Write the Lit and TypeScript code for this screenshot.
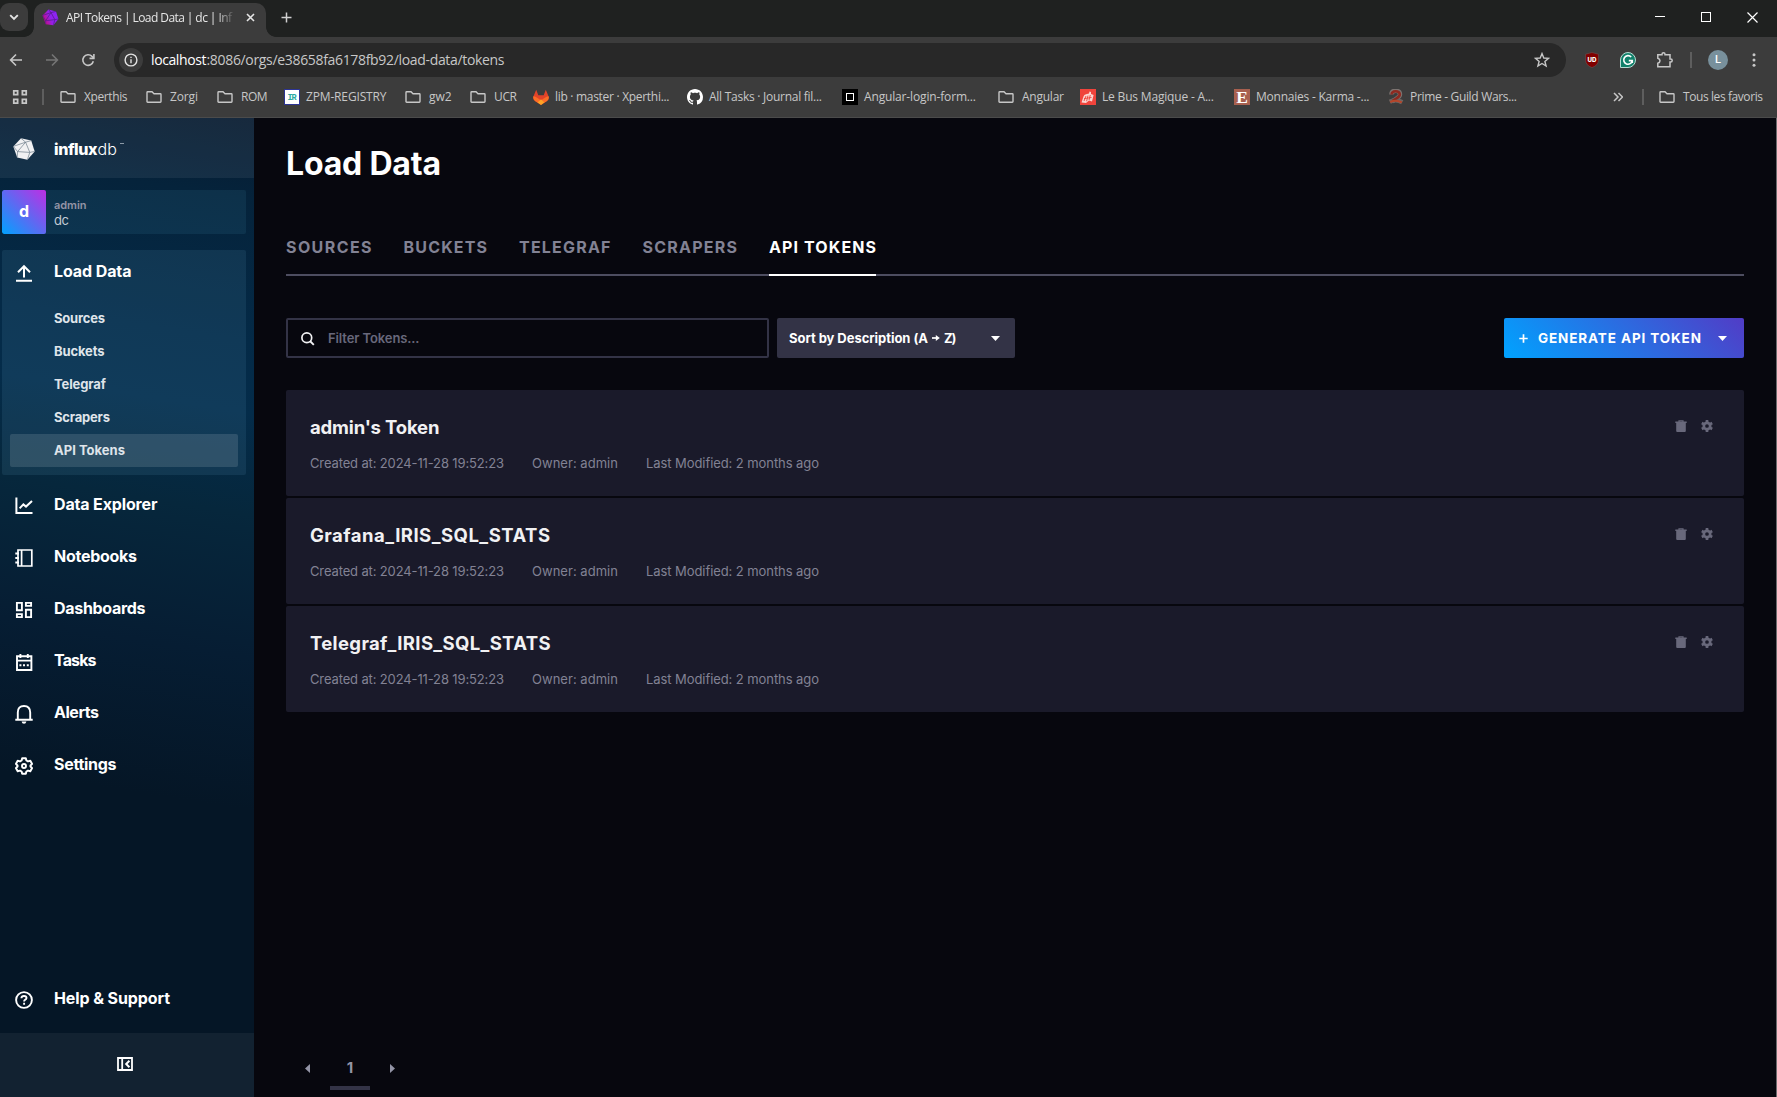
import { LitElement, html, css, svg } from "lit";
import type { TemplateResult, SVGTemplateResult } from "lit";
import { customElement, property } from "lit/decorators.js";
import { classMap } from "lit/directives/class-map.js";
import { styleMap } from "lit/directives/style-map.js";

const icon = (w: number, h: number, body: SVGTemplateResult) =>
  html`<svg width=${w} height=${h} viewBox="0 0 ${w} ${h}" fill="none" stroke="currentColor">${body}</svg>`;

/* A single-line label whose tracking is adjusted so that it spans a given width. */
@customElement("fit-label")
class FitLabel extends LitElement {
  @property({ type: Number }) span = 0;
  static styles = css`
    :host { display: inline-block; white-space: pre; }
    .text { display: inline-block; }
  `;
  render() {
    return html`<span class="text"><slot></slot></span>`;
  }
  updated() {
    const el = this.renderRoot.querySelector<HTMLElement>(".text")!;
    const n = (this.textContent ?? "").length;
    el.style.letterSpacing = "0px";
    const natural = el.getBoundingClientRect().width;
    el.style.letterSpacing = `${(this.span - natural) / Math.max(1, n - 1)}px`;
    this.style.width = `${this.span}px`;
  }
}

const fit = (text: string, span: number) => html`<fit-label .span=${span}>${text}</fit-label>`;

const folder = icon(16, 16, svg`<path d="M1 12.6V3.4Q1 2.7 1.7 2.7H6L8 4.7H14.3Q15 4.7 15 5.4V12.6Q15 13.3 14.3 13.3H1.7Q1 13.3 1 12.6Z" stroke-width="1.4"/>`);

const favicons: Record<string, TemplateResult> = {
  folder,
  iris: html`<svg width="16" height="16" viewBox="0 0 16 16"><rect x=".5" y=".5" width="15" height="15" fill="#fff" stroke="#2c3494"/><text x="8" y="11.2" font-family="Liberation Mono, monospace" font-weight="700" font-size="8.5" text-anchor="middle" textLength="9" fill="#2aa9a0">IR</text></svg>`,
  gitlab: html`<svg width="16" height="16" viewBox="0 0 16 16"><path d="M3.2.8 5.3 6.3H10.7L12.8.8 15.6 7.6Q16.4 10.2 14 12L8 16 2 12Q-.4 10.2.4 7.6Z" fill="#e24329"/><path d="M15.6 7.2Q12.8 7.4 8 11.5L10.8 13.9 14 12Q16.4 10.2 15.6 7.2ZM.4 7.2Q3.2 7.4 8 11.5L5.2 13.9 2 12Q-.4 10.2.4 7.2Z" fill="#fc6d26"/><path d="M8 10.2 4.6 13.4 8 16 11.4 13.4Z" fill="#fca326"/></svg>`,
  github: html`<svg width="16" height="16" viewBox="0 0 16 16"><path fill="#fff" d="M8 0C3.58 0 0 3.58 0 8c0 3.54 2.29 6.53 5.47 7.59.4.07.55-.17.55-.38 0-.19-.01-.82-.01-1.49-2.01.37-2.53-.49-2.69-.94-.09-.23-.48-.94-.82-1.13-.28-.15-.68-.52-.01-.53.63-.01 1.08.58 1.23.82.72 1.21 1.87.87 2.33.66.07-.52.28-.87.51-1.07-1.78-.2-3.64-.89-3.64-3.95 0-.87.31-1.59.82-2.15-.08-.2-.36-1.02.08-2.12 0 0 .67-.21 2.2.82.64-.18 1.32-.27 2-.27s1.36.09 2 .27c1.53-1.04 2.2-.82 2.2-.82.44 1.1.16 1.92.08 2.12.51.56.82 1.27.82 2.15 0 3.07-1.87 3.75-3.65 3.95.29.25.54.73.54 1.48 0 1.07-.01 1.93-.01 2.2 0 .21.15.46.55.38A8.01 8.01 0 0 0 16 8c0-4.42-3.58-8-8-8z"/></svg>`,
  box: html`<svg width="16" height="16" viewBox="0 0 16 16"><rect width="16" height="16" fill="#000"/><rect x="4.5" y="4.5" width="7" height="7" fill="none" stroke="#fff"/></svg>`,
  bus: html`<svg width="16" height="16" viewBox="0 0 16 16"><rect width="16" height="16" fill="#f0443c"/><path d="M1.5 13.5 3.5 7.5Q4 5.6 6 5.2L9 4.4 9.5 2.6 11 3V5L13.6 6 12 12.5 9 11.5 6 14Z" fill="#fbd6d2"/><path d="M4 12 6 7M6.6 12.2 8 6.6M9 11 10.3 6M4 9.6 11.5 8.5" stroke="#f0443c" stroke-width=".9"/></svg>`,
  etsy: html`<svg width="16" height="16" viewBox="0 0 16 16"><rect width="16" height="16" fill="#a8604f"/><text x="8" y="14" font-family="Liberation Serif, serif" font-weight="700" font-size="17.5" text-anchor="middle" fill="#fff">E</text></svg>`,
  prime: html`<svg width="16" height="16" viewBox="0 0 16 16"><path d="M3.4 5.5Q3.4 1.8 7.6 1.8T12 5.2Q12 7.6 8.8 9.3L4.3 12.3" stroke="#7c7370" stroke-width="4.4" fill="none"/><path d="M1.8 12.8Q8 9.6 14.2 13.2" stroke="#6d6562" stroke-width="4.6" fill="none"/><path d="M3.6 5.5Q3.8 2.2 7.6 2.2T11.8 5.2Q11.8 7.4 8.8 9L4.3 12" stroke="#8e2a20" stroke-width="2.6" fill="none"/><path d="M2.2 13Q8 10.2 13.8 13.4" stroke="#b5452a" stroke-width="2" fill="none"/></svg>`,
};

/* [icon, title, title width, slot width] */
const bookmarks: [string, string, number, number][] = [
  ["folder", "Xperthis", 43.5, 86],
  ["folder", "Zorgi", 28, 71],
  ["folder", "ROM", 26.5, 67],
  ["iris", "ZPM-REGISTRY", 80.5, 121],
  ["folder", "gw2", 22.5, 65],
  ["folder", "UCR", 23, 63],
  ["gitlab", "lib · master · Xperthi...", 114.5, 154],
  ["github", "All Tasks · Journal fil...", 113, 155],
  ["box", "Angular-login-form...", 112, 156],
  ["folder", "Angular", 42, 82],
  ["bus", "Le Bus Magique - A...", 112, 154],
  ["etsy", "Monnaies - Karma -...", 113.5, 154],
  ["prime", "Prime - Guild Wars...", 107, 225],
];

@customElement("browser-chrome")
class BrowserChrome extends LitElement {
  static styles = css`
    :host { display: block; height: 118px; box-sizing: border-box; background: #3c3c3c; border-bottom: 1px solid #4b4b4b;
      font: 12px/16px "Open Sans", "Noto Sans", sans-serif; color: #c7c7c7; }
    svg { display: block; flex: none; }
    .strip { display: flex; height: 37px; background: #1f2120; }
    .search { display: flex; align-items: center; justify-content: center; width: 28px; height: 28px; margin-top: 3px; border-radius: 9px; background: #3c3c3c; color: #e3e3e3; }
    .flare { width: 10px; height: 10px; align-self: flex-end; }
    .flare.left { margin-left: -4px; background: radial-gradient(circle at 0 0, transparent 9.5px, #3c3c3c 10.2px); }
    .flare.right { background: radial-gradient(circle at 100% 0, transparent 9.5px, #3c3c3c 10.2px); }
    .tab { display: flex; align-items: center; box-sizing: border-box; width: 232px; height: 34px; margin-top: 3px; padding: 0 11px 6px 8px; border-radius: 10px 10px 0 0; background: #3c3c3c; color: #e6e6e6; }
    .tab .name { width: 169px; margin: 1px 0 0 7px; white-space: nowrap; -webkit-mask-image: linear-gradient(90deg, #000 150px, transparent 170px); }
    .tab .x { margin-left: auto; }
    .plus { margin: 12px 0 0 5px; color: #d0d0d0; }
    .winctl { display: flex; align-items: flex-start; gap: 36px; margin-left: auto; padding: 12px 19px 0 0; color: #fff; }
    .bar { display: flex; align-items: center; height: 46px; padding-left: 9px; color: #c7c7c7; }
    .nav { display: flex; gap: 22px; }
    .dim { color: #757575; }
    .omni { display: flex; align-items: center; box-sizing: border-box; width: 1452px; height: 34px; margin-left: 19px; padding: 0 16px 0 5px; border-radius: 17px; background: #282828; font-size: 14px; }
    .info { display: flex; align-items: center; justify-content: center; width: 24px; height: 24px; border-radius: 12px; background: #3c3c3c; margin-right: 8px; color: #e3e3e3; }
    .host { color: #fff; }
    .star { margin-left: auto; }
    .ext { display: flex; align-items: center; }
    .shield { margin-left: 19px; }
    .writer { margin-left: 21px; }
    .puzzle { margin-left: 20px; }
    .ext .vr, .avatar { margin-left: 16px; }
    .kebab { margin-left: 24px; }
    .vr { width: 2px; height: 16px; background: #5e5e5e; }
    .avatar { width: 20px; height: 20px; border-radius: 50%; background: #78909c; color: #fff; text-align: center; font: 500 11px/20px Roboto, sans-serif; }
    .marks { display: flex; align-items: center; height: 28px; padding: 0 14px 0 12px; white-space: nowrap; }
    .mark { display: flex; align-items: center; gap: 8px; }
    .mark.tight { gap: 6px; }
    .apps { margin-right: 14px; }
    .first { margin-right: 16px; }
    .more { margin-right: 19px; }
    .last { margin-left: 15px; }
  `;
  render() {
    return html`
      <div class="strip">
        <div class="search">${icon(10, 10, svg`<path d="M1.2 3.2 5 7 8.8 3.2" stroke-width="1.9"/>`)}</div>
        <div class="flare left"></div>
        <div class="tab">
          <svg width="17" height="17" viewBox="0 0 17 17">
            <defs><linearGradient id="g" x1="0" y1=".7" x2="1" y2=".3"><stop offset="0" stop-color="#d30971"/><stop offset=".5" stop-color="#9221ea"/><stop offset="1" stop-color="#8a25f5"/></linearGradient></defs>
            <path d="M6.5.4 14 2.4 16.4 10 11.4 16.3 3.8 15.2.6 6.4Z" fill="url(#g)"/>
            <path d="M.6 6.4 9 3.6 14 2.4M9 3.6 6.5.4M9 3.6 12.8 10.6 3.6 11.8ZM12.8 10.6 16.4 10M12.8 10.6 11.4 16.3M3.6 11.8 3.8 15.2M3.6 11.8.6 6.4" stroke="#5a1a92" stroke-width=".8" fill="none"/>
          </svg>
          <div class="name">${fit("API Tokens | Load Data | dc | Inf", 166)}</div>
          <div class="x">${icon(9, 9, svg`<path d="M1 1 8 8M8 1 1 8" stroke-width="1.6"/>`)}</div>
        </div>
        <div class="flare right"></div>
        <div class="plus">${icon(11, 11, svg`<path d="M5.5.5V10.5M.5 5.5H10.5" stroke-width="1.5"/>`)}</div>
        <div class="winctl">
          ${icon(10, 10, svg`<path d="M0 4.5H10"/>`)}
          ${icon(10, 10, svg`<rect x=".5" y=".5" width="9" height="9"/>`)}
          ${icon(11, 11, svg`<path d="M.5.5 10.5 10.5M10.5.5.5 10.5" stroke-width="1.2"/>`)}
        </div>
      </div>
      <div class="bar">
        <div class="nav">
          ${icon(14, 14, svg`<path d="M13 7H2M7 1.5 1.6 7 7 12.5" stroke-width="1.6"/>`)}
          <span class="dim">${icon(14, 14, svg`<path d="M1 7H12M7 1.5 12.4 7 7 12.5" stroke-width="1.6"/>`)}</span>
          ${icon(14, 14, svg`<path d="M12.3 8.2A5.3 5.3 0 1 1 11 3.4L12.6 5" stroke-width="1.6"/><path d="M12.9 1V5.4H8.5" stroke-width="1.6"/>`)}
        </div>
        <div class="omni">
          <div class="info">${icon(14, 14, svg`<circle cx="7" cy="7" r="5.9" stroke-width="1.4"/><path d="M7 6.2V10.2M7 3.8V5.1" stroke-width="1.4"/>`)}</div>
          <span class="host">${fit("localhost", 55.5)}</span>${fit(":8086/orgs/e38658fa6178fb92/load-data/tokens", 298)}
          <span class="star">${icon(16, 16, svg`<path d="M8 1.6 9.8 6 14.5 6.3 10.9 9.4 12.1 14 8 11.5 3.9 14 5.1 9.4 1.5 6.3 6.2 6Z" stroke-width="1.4"/>`)}</span>
        </div>
        <div class="ext">
          <svg class="shield" width="14" height="16" viewBox="0 0 14 16"><path d="M7 .5 13.4 2.2V8.5Q13.2 13.4 7 15.6.8 13.4.6 8.5V2.2Z" fill="#800000" stroke="#6b5252" stroke-width=".6"/><text x="7" y="9.8" font-family="Inter, sans-serif" font-weight="800" font-size="6.2" text-anchor="middle" fill="#fff">UD</text></svg>
          <svg class="writer" width="16" height="16" viewBox="0 0 16 16"><path d="M8 .5A7.5 7.5 0 1 1 8 15.5H.5V8A7.5 7.5 0 0 1 8 .5Z" fill="#11806a" stroke="#b7dcd3" stroke-width="1"/><path d="M11.2 5A4.3 4.3 0 1 0 12.3 8.6H8.8M12.3 8.4V11" stroke="#fff" stroke-width="1.6" fill="none"/></svg>
          <span class="puzzle">${icon(18, 18, svg`<path d="M1.8 3.8H6V3.2A1.5 1.5 0 0 1 9 3.2V3.8H14V8H14.7A1.5 1.5 0 0 1 14.7 11H14V15.8H1.8V12.3Q4 11.7 4 9.8T1.8 7.3Z" stroke-width="1.5"/>`)}</span>
          <div class="vr"></div>
          <div class="avatar">L</div>
          <svg class="kebab" width="4" height="14" viewBox="0 0 4 14" fill="#c7c7c7"><circle cx="2" cy="1.8" r="1.5"/><circle cx="2" cy="7" r="1.5"/><circle cx="2" cy="12.2" r="1.5"/></svg>
        </div>
      </div>
      <div class="marks">
        <div class="apps">${icon(16, 16, svg`<path d="M1.8 1.8H5.6V5.6H1.8ZM10.4 1.8H14.2V5.6H10.4ZM1.8 10.4H5.6V14.2H1.8ZM10.4 10.4H14.2V14.2H10.4Z" stroke-width="1.8"/>`)}</div>
        <div class="vr first"></div>
        ${bookmarks.map(([kind, title, w, slot]) => html`
          <div class=${classMap({ mark: true, tight: kind !== "folder" })} style=${styleMap({ width: `${slot}px` })}>${favicons[kind]}${fit(title, w)}</div>`)}
        <div class="more">${icon(10, 10, svg`<path d="M1 1 5 5 1 9M5.5 1 9.5 5 5.5 9" stroke-width="1.5"/>`)}</div>
        <div class="vr"></div>
        <div class="mark last">${folder}${fit("Tous les favoris", 80)}</div>
      </div>`;
  }
}

const gear = (hole: number) => svg`<path d="M7.2 1.2H10.8L11.4 3.5 13 4.4 15.3 3.8 17.1 6.9 15.5 8.5V9.5L17.1 11.1 15.3 14.2 13 13.6 11.4 14.5 10.8 16.8H7.2L6.6 14.5 5 13.6 2.7 14.2.9 11.1 2.5 9.5V8.5L.9 6.9 2.7 3.8 5 4.4 6.6 3.5Z" stroke-width="2" stroke-linejoin="round"/><circle cx="9" cy="9" r=${hole} stroke-width="1.9"/>`;

const navIcons: Record<string, TemplateResult> = {
  load: icon(18, 18, svg`<path d="M9 13.4V2.6M3 8.2 9 2.2 15 8.2M1 16.7H17" stroke-width="2"/>`),
  explorer: icon(18, 18, svg`<path d="M1.4.6V16H17.5M4.6 11.4 8.4 7.4 11 9.6 17 4" stroke-width="2"/>`),
  notebooks: icon(18, 18, svg`<path d="M3 1H16.8V17H3ZM6.6 1V17" stroke-width="1.7"/><path d="M.3 4.6H4M.3 9H4M.3 13.4H4" stroke-width="2"/>`),
  dashboards: icon(18, 18, svg`<path d="M1.9 1.9H6.9V9.2H1.9ZM10.9 1.9H16.1V4.9H10.9ZM10.9 8.7H16.1V16.1H10.9ZM1.9 13.1H6.9V16.1H1.9Z" stroke-width="1.9"/>`),
  tasks: icon(18, 18, svg`<path d="M2 3.2H16.4V17H2ZM2 7.6H16.4M5.4 1V5M12.8 1V5" stroke-width="1.9"/><path d="M4.4 12.3H6.4M8 12.3H10M11.8 12.3H13.8" stroke-width="2"/>`),
  alerts: icon(18, 20, svg`<path d="M2.8 15.6V8.6Q2.8 2 9 2T15.2 8.6V15.6M.3 15.8H17.7" stroke-width="1.9"/><path d="M6.6 17.6H11.4Q11 19.8 9 19.8T6.6 17.6Z" fill="currentColor" stroke="none"/>`),
  settings: icon(18, 18, gear(2)),
  help: icon(18, 18, svg`<circle cx="9" cy="9" r="7.9" stroke-width="1.9"/><path d="M6.4 7.2Q6.5 5 9 5T11.5 7Q11.5 8.2 10 8.9 9.1 9.3 9.1 10.6M9.1 11.8V13.7" stroke-width="1.9"/>`),
};

const mainNav: [string, string, number][] = [
  ["explorer", "Data Explorer", 103.5],
  ["notebooks", "Notebooks", 83],
  ["dashboards", "Dashboards", 91.5],
  ["tasks", "Tasks", 42.5],
  ["alerts", "Alerts", 45],
  ["settings", "Settings", 62.5],
];
const subNav: [string, number][] = [["Sources", 51], ["Buckets", 50.5], ["Telegraf", 52], ["Scrapers", 56], ["API Tokens", 71]];

@customElement("side-nav")
class SideNav extends LitElement {
  static styles = css`
    :host { display: flex; flex-direction: column; width: 254px; flex: none; color: #fff; font: 700 16px/20px Inter, sans-serif;
      background: linear-gradient(189deg, #071a30 0%, #05233b 8%, #042a47 22%, #042c4a 29%, #06273c 39%, #061d33 53%, #051626 68%, #051626 100%); }
    svg { display: block; flex: none; }
    .brand { display: flex; height: 60px; background: rgba(255, 255, 255, 0.065); }
    .logo { margin: 20px 0 0 13px; }
    .word { display: flex; margin: 21px 0 0 19px; font-size: 16px; font-weight: 800; }
    .word .db { font-weight: 300; }
    .word .tm { width: 4px; height: 1px; margin: 4px 0 0 3px; background: #8c9aa7; }
    .user { display: flex; width: 244px; height: 44px; margin: 12px 0 0 2px; border-radius: 2px; overflow: hidden; background: rgba(100, 200, 230, 0.09); }
    .badge { width: 44px; height: 44px; border-radius: 2px; background: linear-gradient(45deg, #00a3ff, #be2ee4); text-align: center; font-size: 16px; line-height: 43px; }
    .who { padding: 8px 0 0 8px; font-size: 11px; font-weight: 600; line-height: 14px; color: #9394a6; }
    .who .org { display: block; font-size: 13px; font-weight: 400; line-height: 16px; letter-spacing: -0.4px; color: #c4ccd6; }
    .panel { box-sizing: border-box; width: 244px; height: 225px; margin: 16px 0 0 2px; padding: 11px 8px 0; border-radius: 2px; background: rgba(90, 150, 180, 0.15); }
    .row { display: flex; align-items: center; height: 20px; }
    .row .ic { display: flex; justify-content: center; width: 18px; margin: 3px 21px 0 15px; height: 20px; align-items: center; }
    .panel .row { margin: 0 0 21px -2px; height: 20px; }
    .panel .ic { margin: 3px 21px 0 7px; }
    .sub { height: 33px; padding-left: 44px; border-radius: 2px; font-size: 13px; line-height: 33px; color: #dfe4ea; }
    .sub.on { background: rgba(255, 255, 255, 0.125); }
    .list { display: flex; flex-direction: column; gap: 32px; margin-top: 19px; }
    .help { margin: auto 0 25px; }
    .foot { display: flex; align-items: center; justify-content: center; height: 64px; padding: 0 5px 3px 0; box-sizing: border-box; background: rgba(255, 255, 255, 0.055); }
  `;
  row(kind: string, label: string, w: number, extra = "") {
    return html`<div class="row ${extra}"><span class="ic">${navIcons[kind]}</span>${fit(label, w)}</div>`;
  }
  render() {
    return html`
      <div class="brand">
        <svg class="logo" width="22" height="22" viewBox="0 0 22 22">
          <path d="M8 .3 18.2 2.6 21.7 13.4 14.4 21.7 4.2 19.4.3 8.4Z" fill="#f1f1f3"/>
          <path d="M.3 8.4 12.6 4.2 18.2 2.6M12.6 4.2 8 .3M12.6 4.2 16.8 14.4 4.6 13.6ZM16.8 14.4 21.7 13.4M16.8 14.4 14.4 21.7M4.6 13.6 4.2 19.4M4.6 13.6.3 8.4" stroke="#6d7c8a" stroke-width=".7" fill="none"/>
        </svg>
        <div class="word">${fit("influx", 43.5)}<span class="db">${fit("db", 19.5)}</span><span class="tm"></span></div>
      </div>
      <div class="user">
        <div class="badge">d</div>
        <div class="who">${fit("admin", 32.5)}<span class="org">dc</span></div>
      </div>
      <div class="panel">
        ${this.row("load", "Load Data", 77.5)}
        ${subNav.map(([label, w]) => html`<div class=${classMap({ sub: true, on: label === "API Tokens" })}>${fit(label, w)}</div>`)}
      </div>
      <div class="list">${mainNav.map(([k, l, w]) => this.row(k, l, w))}</div>
      ${this.row("help", "Help & Support", 116, "help")}
      <div class="foot">${icon(16, 14, svg`<path d="M1 1H15V13H1ZM5.2 1V13" stroke-width="1.8"/><path d="M12.4 3.8 9.2 7 12.4 10.2" stroke-width="2"/>`)}</div>`;
  }
}

const tabs: [string, number][] = [["SOURCES", 85.5], ["BUCKETS", 83.5], ["TELEGRAF", 91.5], ["SCRAPERS", 94.5], ["API TOKENS", 107]];
const tokens: [string, number][] = [["admin's Token", 129.5], ["Grafana_IRIS_SQL_STATS", 240], ["Telegraf_IRIS_SQL_STATS", 240.5]];

@customElement("tokens-page")
class TokensPage extends LitElement {
  static styles = css`
    :host { display: flex; flex-direction: column; flex: 1; box-sizing: border-box; padding: 0 32px 0 32px; background: #07070e; border-right: 1px solid #6b6b6e;
      color: #fff; font: 700 13px/20px Inter, sans-serif; }
    svg { display: block; flex: none; }
    .title { margin-top: 26px; font-size: 32px; line-height: 40px; }
    .tabs { display: flex; gap: 32px; height: 58px; margin-top: 34px; box-shadow: inset 0 -2px #4d4d60; color: #828294; font-size: 16px; line-height: 58px; }
    .tabs .on { color: #fff; box-shadow: inset 0 -2px #fff; }
    .tools { display: flex; margin-top: 42px; height: 40px; line-height: 40px; }
    .filter { display: flex; align-items: center; box-sizing: border-box; width: 483px; padding-left: 12px; border: 2px solid #333346; border-radius: 2px; font-weight: 600; color: #68687b; }
    .filter svg { margin-right: 13px; color: #f1f1f3; }
    .sort { display: flex; align-items: center; box-sizing: border-box; width: 238px; margin-left: 8px; padding: 0 15px 0 12px; border-radius: 2px; background: #333346; justify-content: space-between; }
    .sort .arrow { margin: 0 4px; }
    .sortText { display: flex; align-items: center; }
    .gen { display: flex; align-items: center; box-sizing: border-box; width: 240px; margin-left: auto; padding: 0 17px 0 15px; border-radius: 2px; background: linear-gradient(45deg, #00a3ff, #513cc6); font-size: 13.5px; }
    .gen .label { margin: 0 auto 0 10px; }
    .cards { display: flex; flex-direction: column; gap: 2px; margin-top: 32px; }
    .card { display: flex; justify-content: space-between; box-sizing: border-box; height: 106px; padding: 24px 31px 0 24px; border-radius: 2px; background: #1a1a2a; }
    .name { font-size: 18.5px; line-height: 26px; color: #f1f1f3; }
    .meta { display: flex; gap: 28px; margin-top: 13px; font-weight: 400; line-height: 20px; color: #828294; }
    .acts { display: flex; gap: 14px; margin-top: 6px; color: #68687b; }
    .pager { display: flex; margin: auto 0 7px 19px; height: 36px; color: #9394a6; font-size: 15px; line-height: 27px; text-align: center; }
    .pager .tri { margin-top: 10px; }
    .pager .num { width: 40px; margin: 0 20px; box-shadow: inset 0 -4px #333346; }
  `;
  render() {
    const caret = icon(9, 5, svg`<path d="M0 0H9L4.5 5Z" fill="currentColor" stroke="none"/>`);
    return html`
      <div class="title">${fit("Load Data", 155)}</div>
      <div class="tabs">${tabs.map(([t, w]) => html`<div class=${classMap({ on: t === "API TOKENS" })}>${fit(t, w)}</div>`)}</div>
      <div class="tools">
        <div class="filter">${icon(15, 15, svg`<circle cx="6.8" cy="6.8" r="4.9" stroke-width="1.7"/><path d="M10 10 13.8 13.8" stroke-width="1.9"/>`)}${fit("Filter Tokens...", 91.5)}</div>
        <div class="sort"><span class="sortText">${fit("Sort by Description (A", 139)}<svg class="arrow" width="8" height="8" viewBox="0 0 8 8"><path d="M0 4H4.5" stroke="#fff" stroke-width="1.7"/><path d="M3.8.9 7.8 4 3.8 7.1Z" fill="#fff"/></svg>${fit("Z)", 12.5)}</span>${caret}</div>
        <div class="gen">${icon(9, 9, svg`<path d="M4.5.3V8.7M.3 4.5H8.7" stroke-width="1.7"/>`)}<span class="label">${fit("GENERATE API TOKEN", 163)}</span>${caret}</div>
      </div>
      <div class="cards">
        ${tokens.map(([name, w]) => html`
          <div class="card">
            <div>
              <div class="name">${fit(name, w)}</div>
              <div class="meta">${fit("Created at: 2024-11-28 19:52:23", 194)}${fit("Owner: admin", 86)}${fit("Last Modified: 2 months ago", 173)}</div>
            </div>
            <div class="acts">
              ${icon(12, 12, svg`<path d="M1.2 3H10.8V11Q10.8 12 9.8 12H2.2Q1.2 12 1.2 11ZM.3 1.6H11.7V3H.3ZM3.4.2H8.6V1.8H7.4V1.2H4.6V1.8H3.4Z" fill="currentColor" stroke="none"/>`)}
              ${icon(12, 12, svg`<circle cx="6" cy="6" r="3.2" stroke-width="2.7"/><path d="M6 0V2.4M6 12V9.6M11.2 3 9.1 4.2M11.2 9 9.1 7.8M.8 3 2.9 4.2M.8 9 2.9 7.8" stroke-width="2.7"/>`)}
            </div>
          </div>`)}
      </div>
      <div class="pager">
        <span class="tri">${icon(5, 9, svg`<path d="M5 0V9L0 4.5Z" fill="currentColor" stroke="none"/>`)}</span>
        <span class="num">1</span>
        <span class="tri">${icon(5, 9, svg`<path d="M0 0V9L5 4.5Z" fill="currentColor" stroke="none"/>`)}</span>
      </div>`;
  }
}

@customElement("app-root")
class AppRoot extends LitElement {
  static styles = css`
    :host { display: flex; flex-direction: column; width: 1777px; height: 1097px; overflow: hidden; background: #07070e; }
    .body { display: flex; flex: 1; min-height: 0; }
  `;
  render() {
    return html`<browser-chrome></browser-chrome><div class="body"><side-nav></side-nav><tokens-page></tokens-page></div>`;
  }
}
